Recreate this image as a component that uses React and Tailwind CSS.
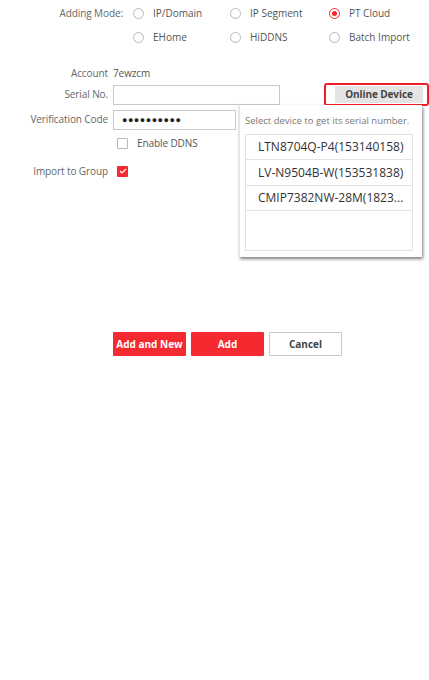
import React from "react";

const F = { fontFamily: '"Open Sans", "Noto Sans", Arial, sans-serif' };

function Radio({ checked, label }) {
  return (
    <div className="flex items-center h-6">
      <span
        className={`w-[11px] h-[11px] rounded-full border flex items-center justify-center bg-white ${
          checked ? "border-[#f52a30]" : "border-[#b8b8b8]"
        }`}
      >
        {checked && <span className="w-[5px] h-[5px] rounded-full bg-[#f52a30]" />}
      </span>
      <span className="ml-[9px] text-[10px] text-[#555]">{label}</span>
    </div>
  );
}

export default function App() {
  return (
    <div className="relative w-[429px] h-[680px] bg-white overflow-hidden" style={F}>
      {/* Adding mode */}
      <div className="flex pt-[1px]">
        <div className="w-[123px] text-right text-[10px] text-[#666] h-6 leading-6 tracking-[-0.1px]">Adding Mode:</div>
        <div className="ml-[10px] grid grid-cols-[97px_99px_auto]">
          <Radio label="IP/Domain" />
          <Radio label="IP Segment" />
          <Radio checked label="PT Cloud" />
          <Radio label="EHome" />
          <Radio label="HiDDNS" />
          <Radio label="Batch Import" />
        </div>
      </div>

      {/* form */}
      <div className="mt-[12px] flex flex-col text-[10px] text-[#666] tracking-[-0.1px]">
        <div className="flex items-center h-6">
          <div className="w-[108px] text-right">Account</div>
          <div className="ml-[5px] text-[#555]">7ewzcm</div>
        </div>
        <div className="flex items-center h-[25px] mt-[-3px]">
          <div className="w-[108px] text-right">Serial No.</div>
          <div className="ml-[5px] w-[167px] h-[20px] border border-[#c8c8c8] bg-white" />
          <div className="ml-[44px] w-[105px] h-[23px] border-2 border-[#f01e28] rounded-[3px] flex items-center pl-[9px] pr-[4px] py-[1px]">
            <div className="flex-1 h-full bg-[#e4e4e4] flex items-center justify-center text-[10px] font-bold text-[#444]">
              Online Device
            </div>
          </div>
        </div>
        <div className="flex items-center h-[25px]">
          <div className="w-[108px] text-right">Verification Code</div>
          <div className="ml-[5px] w-[123px] h-[20px] border border-[#c8c8c8] bg-white flex items-center pl-[8px]">
            <span className="text-[9px] tracking-[0.5px] text-[#222]">●●●●●●●●●●</span>
          </div>
        </div>
        <div className="flex items-center h-[24px] mt-[-1px]">
          <div className="w-[108px]" />
          <div className="ml-[9px] w-[11px] h-[11px] border border-[#b8b8b8] rounded-[1px] bg-white" />
          <div className="ml-[9px] text-[#555]">Enable DDNS</div>
        </div>
        <div className="flex items-center h-[24px] mt-[4px]">
          <div className="w-[108px] text-right">Import to Group</div>
          <div className="ml-[9px] w-[11px] h-[11px] bg-[#f52a30] rounded-[1px] flex items-center justify-center">
            <svg width="8" height="6" viewBox="0 0 8 6">
              <path d="M1 3 L3 5 L7 1" stroke="white" strokeWidth="1.2" fill="none" />
            </svg>
          </div>
        </div>
      </div>

      {/* buttons */}
      <div className="mt-[149px] flex pl-[113px] gap-[5px]">
        <button className="w-[73px] h-[24px] bg-[#f52a30] text-white text-[10px] font-bold rounded-[1px]">
          Add and New
        </button>
        <button className="w-[73px] h-[24px] bg-[#f52a30] text-white text-[10px] font-bold rounded-[1px]">
          Add
        </button>
        <button className="w-[73px] h-[24px] bg-white border border-[#c8c8c8] text-[#444] text-[10px] font-bold rounded-[1px]">
          Cancel
        </button>
      </div>

      {/* popup */}
      <div className="absolute left-[239px] top-[105px] w-[183px] h-[152px] bg-white shadow-[1px_2px_3px_rgba(0,0,0,0.5)] border-l border-[#e6e6e6] px-[5px] pt-[9px]">
        <div className="text-[9.5px] text-[#777] whitespace-nowrap">Select device to get its serial number.</div>
        <div className="mt-[6px] w-[168px] border border-[#e2e2e2] text-[12px] text-[#333]">
          <div className="h-[25px] flex items-center pl-[12px] border-b border-[#e2e2e2]">LTN8704Q-P4(153140158)</div>
          <div className="h-[26px] flex items-center pl-[12px] border-b border-[#e2e2e2]">LV-N9504B-W(153531838)</div>
          <div className="h-[25px] flex items-center pl-[12px] border-b border-[#e2e2e2]">CMIP7382NW-28M(1823...</div>
          <div className="h-[39px]" />
        </div>
      </div>
    </div>
  );
}
